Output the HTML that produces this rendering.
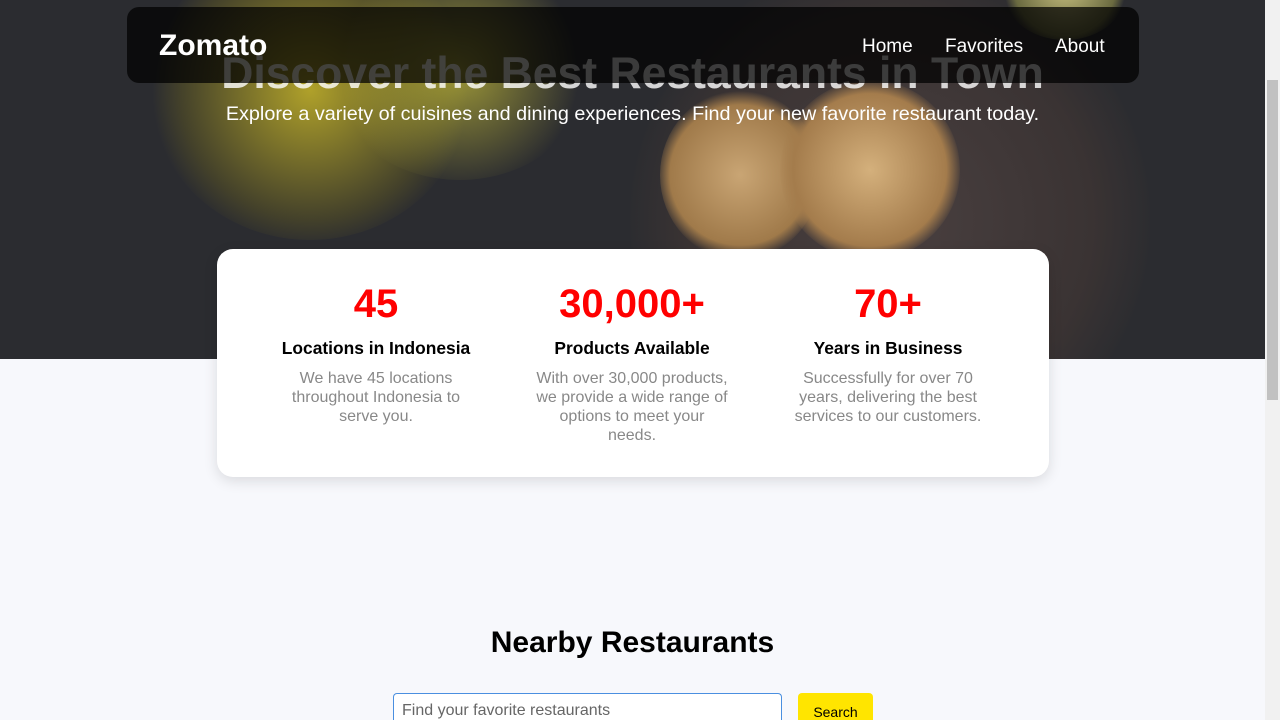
<!DOCTYPE html>
<html><head><style>
*{margin:0;padding:0;box-sizing:border-box}
html{overflow:hidden;height:720px}
body{width:1280px;height:720px;overflow:hidden;background:#f7f8fc;font-family:"Liberation Sans",sans-serif;position:relative}
.hero{position:absolute;left:0;top:0;width:1265px;height:359px;background:#2b2c30;overflow:hidden}
.hero .b{position:absolute;border-radius:50%}
.nav{position:absolute;left:127px;top:7px;width:1012px;height:76px;background:rgba(0,0,0,.72);border-radius:12px;z-index:3}
.logo{position:absolute;left:32px;top:22px;font-size:30px;font-weight:bold;color:#fff}
.links{position:absolute;top:29px;font-size:19px;color:#fff}
h1{position:absolute;top:49px;left:0;width:1265px;text-align:center;font-size:44.5px;color:rgba(255,255,255,.8);z-index:2}
.sub{position:absolute;top:103px;left:0;width:1265px;text-align:center;font-size:19.8px;color:#fff;z-index:2}
.card{position:absolute;left:217px;top:249px;width:832px;height:228px;background:#fff;border-radius:16px;box-shadow:0 4px 14px rgba(0,0,0,.12);z-index:4}
.col{position:absolute;top:30px;width:256px;text-align:center}
.num{font-size:40px;font-weight:bold;color:#f00;line-height:50px}
.h{font-size:17.4px;font-weight:bold;color:#000;margin-top:8px;line-height:22px}
.d{font-size:16px;color:#888;line-height:19px;width:195px;margin:10px auto 0}
.nr{position:absolute;top:626px;left:0;width:1265px;text-align:center;font-size:30px;font-weight:bold}
.inp{position:absolute;left:393px;top:693px;width:389px;height:27px;border:1px solid #4a8fe0;border-bottom:none;border-radius:4px 4px 0 0;background:#fff;font-size:16px;color:#666;padding:8px 8px 0}
.btn{position:absolute;left:798px;top:693px;width:75px;height:27px;background:#ffe500;border-radius:4px 4px 0 0;font-size:14px;text-align:center;padding-top:11px}
.sb{position:absolute;left:1265px;top:0;width:15px;height:720px;background:#f1f1f1}
.th{position:absolute;left:1267px;top:80px;width:11px;height:320px;background:#c1c1c1}
</style></head><body>
<div class="hero">
<div class="b" style="left:150px;top:-60px;width:320px;height:300px;background:radial-gradient(circle,rgba(220,200,40,.75),rgba(120,110,30,.3) 60%,transparent 72%)"></div>
<div class="b" style="left:330px;top:-40px;width:260px;height:220px;background:radial-gradient(circle,rgba(230,220,60,.6),transparent 70%)"></div>
<div class="b" style="left:630px;top:-40px;width:520px;height:520px;background:radial-gradient(circle,#4a4040 0%,#3a3333 55%,#2b2c30 72%)"></div>
<div class="b" style="left:660px;top:90px;width:160px;height:170px;background:radial-gradient(circle,#c9a574,#a07a4a 60%,transparent 72%)"></div>
<div class="b" style="left:780px;top:80px;width:180px;height:180px;background:radial-gradient(circle,#d4b07c,#a47c4c 60%,transparent 72%)"></div>
<div class="b" style="left:1000px;top:-70px;width:130px;height:110px;background:radial-gradient(circle,#c8c080,#6a6a40 60%,transparent 72%)"></div>
</div>
<div class="nav"><div class="logo">Zomato</div>
<div class="links" style="left:735px">Home</div><div class="links" style="left:818px">Favorites</div><div class="links" style="left:928px">About</div></div>
<h1>Discover the Best Restaurants in Town</h1>
<div class="sub">Explore a variety of cuisines and dining experiences. Find your new favorite restaurant today.</div>
<div class="card">
<div class="col" style="left:31px"><div class="num">45</div><div class="h">Locations in Indonesia</div><div class="d">We have 45 locations throughout Indonesia to serve you.</div></div>
<div class="col" style="left:287px"><div class="num">30,000+</div><div class="h">Products Available</div><div class="d">With over 30,000 products, we provide a wide range of options to meet your needs.</div></div>
<div class="col" style="left:543px"><div class="num">70+</div><div class="h">Years in Business</div><div class="d">Successfully for over 70 years, delivering the best services to our customers.</div></div>
</div>
<div class="nr">Nearby Restaurants</div>
<div class="inp">Find your favorite restaurants</div>
<div class="btn">Search</div>
<div class="sb"></div><div class="th"></div>
</body></html>
